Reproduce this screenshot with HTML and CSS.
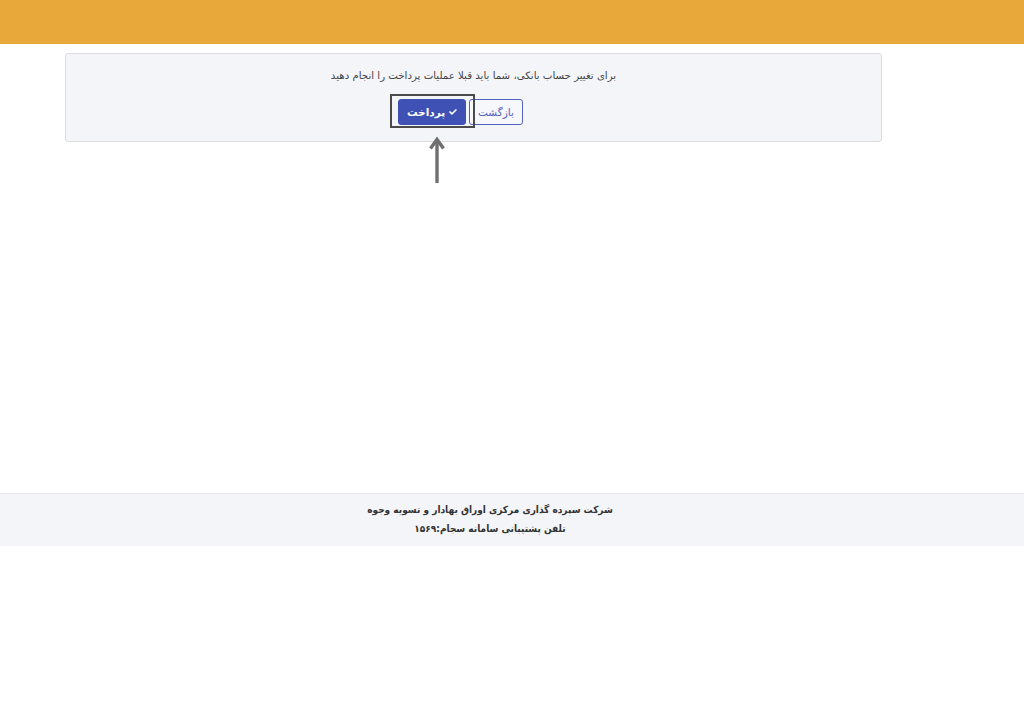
FILE: index.html
```html
<!DOCTYPE html>
<html lang="fa" dir="rtl">
<head>
<meta charset="utf-8">
<title>پرداخت</title>
<link rel="stylesheet" href="styles.css">
</head>
<body>
<header class="topbar"></header>
<main class="main">
  <section class="card">
    <p class="message">برای تغییر حساب بانکی، شما باید قبلا عملیات پرداخت را انجام دهید</p>
    <div class="actions">
      <button class="btn btn-outline" type="button">بازگشت</button>
      <span class="pay-wrap">
        <button class="btn btn-primary" type="button"><svg class="check" viewBox="0 0 512 512" aria-hidden="true"><path d="M173.9 439.4l-166.4-166.4c-10-10-10-26.2 0-36.2l36.2-36.2c10-10 26.2-10 36.2 0L192 312.7 432.1 72.6c10-10 26.2-10 36.2 0l36.2 36.2c10 10 10 26.2 0 36.2l-294.4 294.4c-10 10-26.2 10-36.2 0z" fill="#fff"/></svg>پرداخت</button>
        <span class="highlight"></span>
        <svg class="arrow" viewBox="0 0 16 48" aria-hidden="true"><path d="M8 47V4" stroke="#6f6f6f" stroke-width="3.4" fill="none"/><path d="M1.5 12.5L8 3.5l6.5 9" stroke="#6f6f6f" stroke-width="3.4" fill="none" stroke-linejoin="miter"/></svg>
      </span>
    </div>
  </section>
</main>
<footer class="footer">
  <div class="footer-line">شرکت سپرده گذاری مرکزی اوراق بهادار و تسویه وجوه</div>
  <div class="footer-line">تلفن پشتیبانی سامانه سجام:۱۵۶۹</div>
</footer>
</body>
</html>
```

FILE: styles.css
```css
html, body {
  margin: 0;
  padding: 0;
  background: #ffffff;
}
body {
  font-family: "DejaVu Sans", "Noto Sans", sans-serif;
  color: #333;
}
.topbar {
  height: 44px;
  background: #e8a93a;
}
.main {
  height: 449px;
  padding-top: 9px;
  box-sizing: border-box;
}
.card {
  margin-left: 65px;
  margin-right: 142px;
  height: 89px;
  box-sizing: border-box;
  background: #f4f5f9;
  border: 1px solid #dcdcdc;
  border-radius: 3px;
  padding-top: 14px;
}
.message {
  margin: 0;
  text-align: center;
  font-size: 10.2px;
  line-height: 16px;
  color: #444;
}
.actions {
  display: flex;
  justify-content: center;
  align-items: center;
  gap: 3px;
  margin-top: 15px;
  padding-right: 26px;
}
.btn {
  font-family: inherit;
  font-size: 10.5px;
  height: 26px;
  border-radius: 3px;
  padding: 0 8px;
  display: inline-flex;
  align-items: center;
  gap: 4px;
  cursor: pointer;
  box-sizing: border-box;
}
.btn-outline {
  background: #f7f8fc;
  border: 1.5px solid #5262c0;
  color: #5262c0;
  width: 54px;
  justify-content: center;
}
.btn-primary {
  background: #3f51b5;
  border: 1px solid #3f51b5;
  color: #fff;
  width: 68px;
  justify-content: center;
  font-weight: bold;
}
.check {
  width: 10px;
  height: 10px;
}
.pay-wrap {
  position: relative;
  display: inline-flex;
}
.highlight {
  position: absolute;
  left: -8px;
  right: -9px;
  top: -5px;
  bottom: -3px;
  border: 2px solid #4a4a4a;
  pointer-events: none;
}
.arrow {
  position: absolute;
  left: 31px;
  top: 37px;
  width: 16px;
  height: 48px;
}
.footer {
  background: #f4f5f8;
  border-top: 1px solid #e6e6e6;
  padding: 6px 44px 8px 0;
  text-align: center;
}
.footer-line {
  font-family: "DejaVu Sans Condensed", "DejaVu Sans", sans-serif;
  font-size: 10px;
  line-height: 19px;
  font-weight: bold;
  color: #333;
}
```
